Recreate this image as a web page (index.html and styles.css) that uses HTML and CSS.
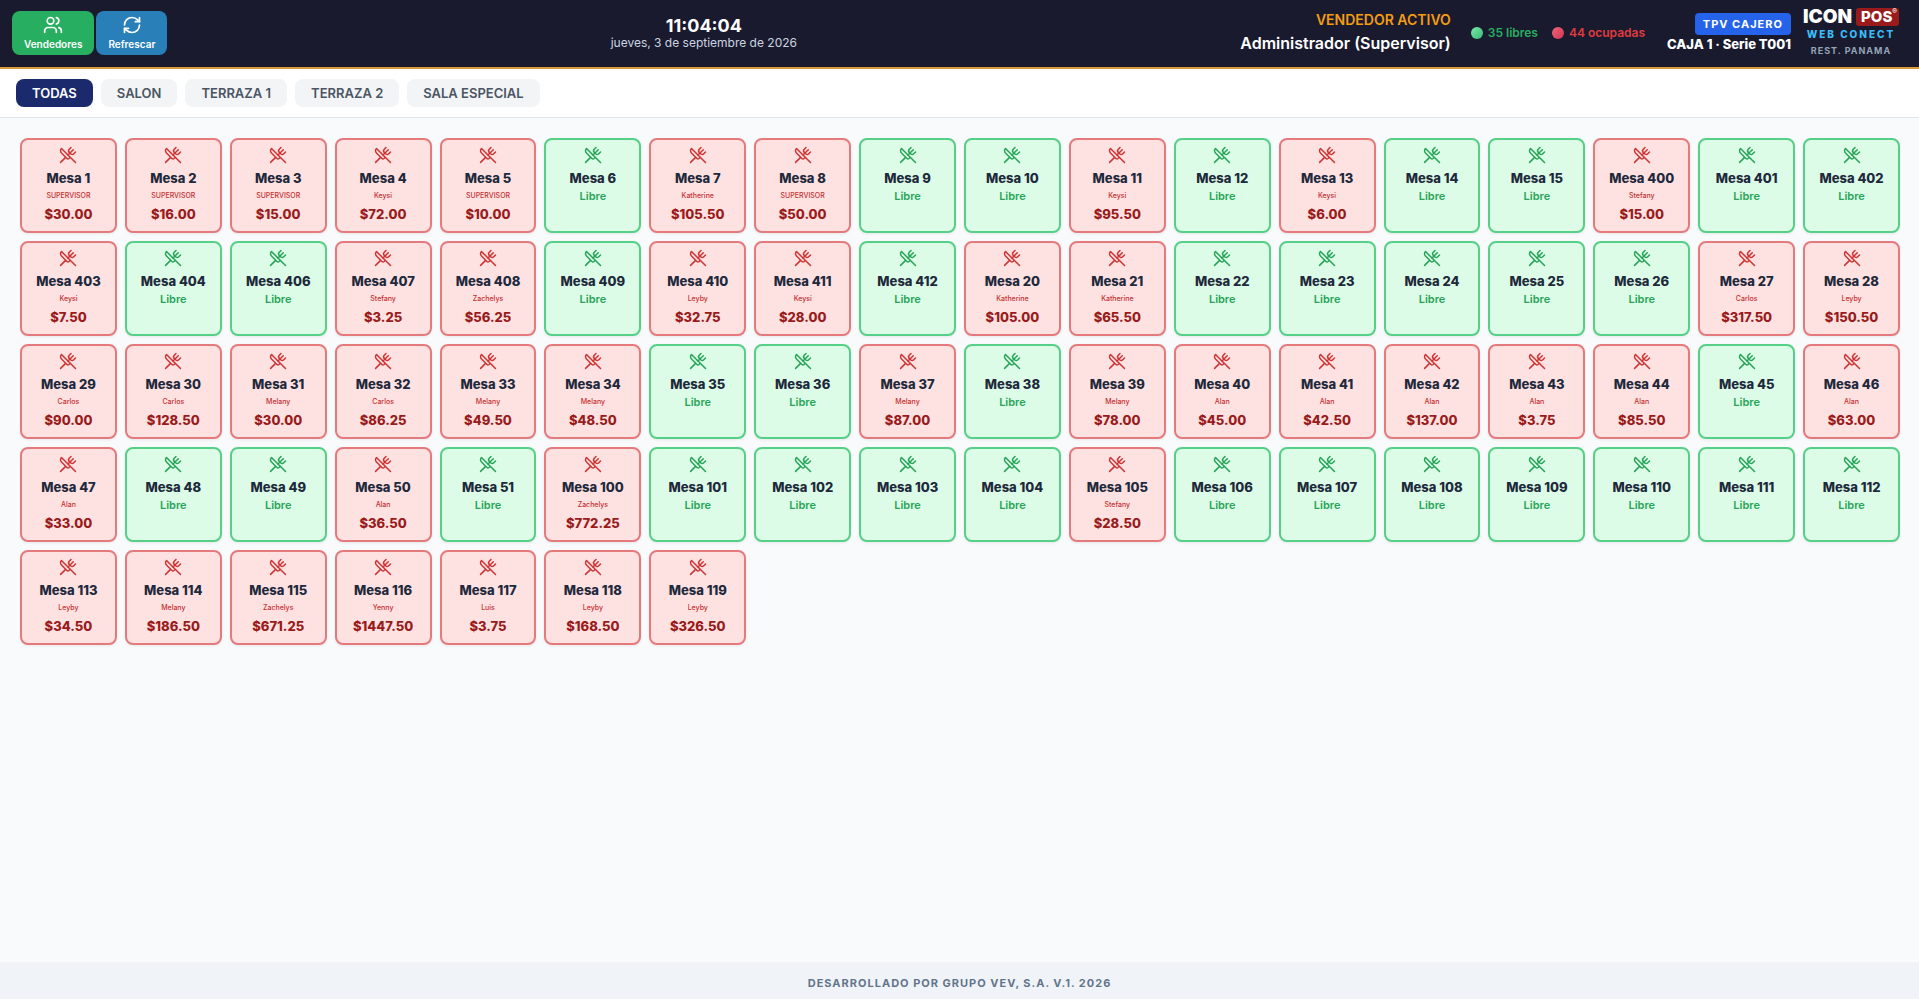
FILE: index.html
```html
<!DOCTYPE html>
<html lang="es">
<head>
<meta charset="utf-8">
<meta name="viewport" content="width=device-width, initial-scale=1">
<title>ICON POS - Mesas</title>
<link rel="stylesheet" href="styles.css">
</head>
<body>
<svg class="sprite" aria-hidden="true">
  <symbol id="utensils" viewBox="0 0 24 24">
    <path d="m16 2-2.3 2.3a3 3 0 0 0 0 4.2l1.8 1.8a3 3 0 0 0 4.2 0L22 8"/>
    <path d="M15 15 3.3 3.3a4.2 4.2 0 0 0 0 6l7.3 7.3c.7.7 2 .7 2.8 0L15 15Zm0 0 7 7"/>
    <path d="m2.1 21.8 6.4-6.3"/>
    <path d="m19 5-7 7"/>
  </symbol>
</svg>

<header class="topbar">
  <div class="actions">
    <button type="button" class="action action-sellers">
      <svg class="action-icon" viewBox="0 0 24 24" aria-hidden="true"><path d="M16 21v-2a4 4 0 0 0-4-4H6a4 4 0 0 0-4 4v2"/><circle cx="9" cy="7" r="4"/><path d="M22 21v-2a4 4 0 0 0-3-3.87"/><path d="M16 3.13a4 4 0 0 1 0 7.75"/></svg>
      Vendedores
    </button>
    <button type="button" class="action action-refresh">
      <svg class="action-icon" viewBox="0 0 24 24" aria-hidden="true"><path d="M3 12a9 9 0 0 1 9-9 9.75 9.75 0 0 1 6.74 2.74L21 8"/><path d="M21 3v5h-5"/><path d="M21 12a9 9 0 0 1-9 9 9.75 9.75 0 0 1-6.74-2.74L3 16"/><path d="M8 16H3v5"/></svg>
      Refrescar
    </button>
  </div>

  <div class="clock">
    <div class="clock-time">11:04:04</div>
    <div class="clock-date">jueves, 3 de septiembre de 2026</div>
  </div>

  <div class="status">
    <div class="seller">
      <div class="seller-label">VENDEDOR ACTIVO</div>
      <div class="seller-name">Administrador (Supervisor)</div>
    </div>
    <div class="counts">
      <span class="count count-free"><i class="dot"></i>35 libres</span>
      <span class="count count-busy"><i class="dot"></i>44 ocupadas</span>
    </div>
    <div class="register">
      <span class="register-badge">TPV CAJERO</span>
      <span class="register-name">CAJA 1 · Serie T001</span>
    </div>
    <div class="brand">
      <div class="brand-main">ICON <span class="brand-pos">POS<sup class="brand-mark">®</sup></span></div>
      <div class="brand-sub">WEB CONECT</div>
      <div class="brand-place">REST. PANAMA</div>
    </div>
  </div>
</header>

<nav class="tabs" aria-label="Zonas">
  <button type="button" class="tab tab-active">TODAS</button>
  <button type="button" class="tab">SALON</button>
  <button type="button" class="tab">TERRAZA 1</button>
  <button type="button" class="tab">TERRAZA 2</button>
  <button type="button" class="tab">SALA ESPECIAL</button>
</nav>

<main class="floor" id="floor"></main>

<footer class="footer">DESARROLLADO POR GRUPO VEV, S.A. V.1. 2026</footer>
<script src="tables.js"></script>
</body>
</html>
```

FILE: tables.js
```js
// Each entry: table number, then seller and amount when the table is occupied.
const tables = `
1 SUPERVISOR 30.00|2 SUPERVISOR 16.00|3 SUPERVISOR 15.00|4 Keysi 72.00|5 SUPERVISOR 10.00|6
7 Katherine 105.50|8 SUPERVISOR 50.00|9|10|11 Keysi 95.50|12|13 Keysi 6.00|14|15
400 Stefany 15.00|401|402|403 Keysi 7.50|404|406|407 Stefany 3.25|408 Zachelys 56.25|409
410 Leyby 32.75|411 Keysi 28.00|412|20 Katherine 105.00|21 Katherine 65.50|22|23|24|25|26
27 Carlos 317.50|28 Leyby 150.50|29 Carlos 90.00|30 Carlos 128.50|31 Melany 30.00
32 Carlos 86.25|33 Melany 49.50|34 Melany 48.50|35|36|37 Melany 87.00|38|39 Melany 78.00
40 Alan 45.00|41 Alan 42.50|42 Alan 137.00|43 Alan 3.75|44 Alan 85.50|45|46 Alan 63.00
47 Alan 33.00|48|49|50 Alan 36.50|51|100 Zachelys 772.25|101|102|103|104
105 Stefany 28.50|106|107|108|109|110|111|112|113 Leyby 34.50|114 Melany 186.50
115 Zachelys 671.25|116 Yenny 1447.50|117 Luis 3.75|118 Leyby 168.50|119 Leyby 326.50
`.trim().split(/[|\n]/).map((row) => row.split(" "));

document.getElementById("floor").innerHTML = tables.map(([number, seller, total]) => `
  <button type="button" class="mesa ${seller ? "mesa-busy" : "mesa-free"}">
    <svg class="mesa-icon" aria-hidden="true"><use href="#utensils"/></svg>
    <span class="mesa-name">Mesa ${number}</span>
    ${seller
      ? `<span class="mesa-seller">${seller}</span><span class="mesa-total">$${total}</span>`
      : `<span class="mesa-state">Libre</span>`}
  </button>`).join("");
```

FILE: styles.css
```css
* { box-sizing: border-box; }

body {
  margin: 0;
  min-height: 100vh;
  display: flex;
  flex-direction: column;
  background: #f8fafc;
  font-family: Inter, "Liberation Sans", sans-serif;
  color: #1f2937;
}

button {
  font: inherit;
  border: 0;
  cursor: pointer;
}

.sprite { display: none; }

/* Top bar */
.topbar {
  display: flex;
  align-items: center;
  justify-content: space-between;
  padding: 6px 20px 7px 12px;
  min-height: 69px;
  background: #1a1a2e;
  border-bottom: 2px solid #dc9a38;
}

.actions { display: flex; gap: 2px; }

.action {
  display: flex;
  flex-direction: column;
  align-items: center;
  padding: 4px 12px 2px;
  border-radius: 8px;
  color: #fff;
  font-size: 10px;
  line-height: 18px;
  font-weight: 600;
}
.action-sellers { background: #27ae60; }
.action-refresh { background: #2980b9; }

.action-icon {
  width: 20px;
  height: 20px;
  fill: none;
  stroke: currentColor;
  stroke-width: 2;
  stroke-linecap: round;
  stroke-linejoin: round;
}

.clock { padding-top: 2px; text-align: center; }
.clock-time {
  color: #fff;
  font-size: 18px;
  line-height: 18px;
  font-weight: 700;
}
.clock-date {
  color: #cbd5e1;
  font-size: 12px;
  line-height: 16px;
}

.status { display: flex; align-items: center; }

.seller {
  margin-right: 20px;
  padding-bottom: 3px;
  text-align: right;
}
.seller-label {
  color: #f39c12;
  font-size: 14px;
  line-height: 22px;
  font-weight: 600;
}
.seller-name {
  color: #fff;
  font-size: 16px;
  line-height: 24px;
  font-weight: 600;
}

.counts { display: flex; gap: 14px; margin-right: 22px; }
.count {
  display: flex;
  align-items: center;
  gap: 5px;
  font-size: 12px;
  line-height: 16px;
  font-weight: 600;
}
.count-free { color: #27ae60; }
.count-busy { color: #e03c40; }
.dot {
  width: 12px;
  height: 12px;
  border-radius: 50%;
}
.count-free .dot { background: linear-gradient(135deg, #7deba8, #35b877); }
.count-busy .dot { background: linear-gradient(135deg, #f0667a, #cf3450); }

.register {
  display: flex;
  flex-direction: column;
  align-items: flex-end;
  margin-right: 12px;
}
.register-badge {
  padding: 3px 8px;
  border-radius: 4px;
  background: #2563eb;
  color: #fff;
  font-size: 11px;
  line-height: 16px;
  font-weight: 700;
  letter-spacing: 1px;
}
.register-name {
  color: #fff;
  font-size: 13px;
  line-height: 18px;
  font-weight: 800;
}

.brand {
  padding-top: 2px;
  text-align: center;
  font-weight: 800;
}
.brand-main {
  display: flex;
  align-items: center;
  justify-content: center;
  gap: 4px;
  color: #fff;
  font-size: 19px;
  line-height: 18px;
  font-weight: 900;
}
.brand-pos {
  display: flex;
  padding: 0 2px 0 5px;
  border-radius: 3px;
  background: #991b1b;
  font-size: 15px;
  font-weight: 800;
}
.brand-mark { font-size: 7px; line-height: 8px; }
.brand-sub {
  color: #38bdf8;
  font-size: 10px;
  line-height: 16px;
  letter-spacing: 2px;
}
.brand-place {
  color: #94a3b8;
  font-size: 9px;
  line-height: 18px;
  font-weight: 700;
  letter-spacing: 1px;
}

/* Zone tabs */
.tabs {
  display: flex;
  flex-wrap: wrap;
  gap: 8px;
  padding: 10px 16px;
  background: #fff;
  border-bottom: 1px solid #e2e5ea;
}
.tab {
  padding: 5px 16px;
  border-radius: 8px;
  background: #f3f4f6;
  color: #4b5563;
  font-size: 13px;
  line-height: 18px;
  font-weight: 600;
}
.tab-active { background: #1a2a6c; color: #fff; }

/* Table grid */
.floor {
  flex: 1;
  display: grid;
  grid-template-columns: repeat(auto-fill, minmax(96px, 1fr));
  align-content: start;
  gap: 8px;
  padding: 20px 19px 20px 20px;
}

.mesa {
  display: flex;
  flex-direction: column;
  align-items: center;
  justify-content: flex-start;
  min-height: 95px;
  padding: 6px 4px;
  border: 2px solid;
  border-radius: 8px;
  box-shadow: 0 1px 3px rgba(0, 0, 0, 0.08);
}
.mesa-busy { background: #fee2e2; border-color: #e57a7d; }
.mesa-free { background: #dcfce7; border-color: #56d086; }

.mesa-icon {
  width: 18px;
  height: 18px;
  margin-bottom: 4px;
  fill: none;
  stroke: currentColor;
  stroke-width: 2;
  stroke-linecap: round;
  stroke-linejoin: round;
}
.mesa-busy .mesa-icon { color: #cf3434; }
.mesa-free .mesa-icon { color: #27a457; }

.mesa-name {
  color: #1e293b;
  font-size: 13px;
  line-height: 20px;
  font-weight: 800;
}
.mesa-seller {
  color: #c53030;
  font-size: 7px;
  line-height: 16px;
  font-weight: 500;
}
.mesa-total {
  color: #991b1b;
  font-size: 13px;
  line-height: 20px;
  font-weight: 800;
}
.mesa-state {
  color: #27a457;
  font-size: 11px;
  line-height: 16px;
  font-weight: 600;
}

.footer {
  padding: 12px 12px 7px;
  background: #f0f4f8;
  color: #64748b;
  font-size: 11px;
  line-height: 18px;
  font-weight: 700;
  letter-spacing: 1px;
  text-align: center;
}
```
